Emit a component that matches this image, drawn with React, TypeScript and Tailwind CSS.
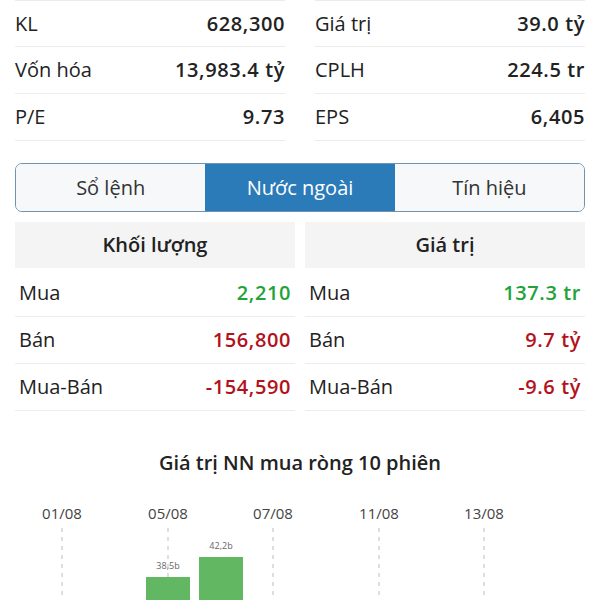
import React from "react";

const font = { fontFamily: '"Open Sans", "Noto Sans", sans-serif' };

function TopRow({ label, value, first }: { label: string; value: string; first?: boolean }) {
  return (
    <div
      className={`flex h-[47px] items-center justify-between border-b border-[#ececec] ${first ? "border-t" : ""}`}
    >
      <span className="text-[20px] text-[#222]">{label}</span>
      <span className="text-[20px] font-semibold tracking-[0.6px] text-[#222]">{value}</span>
    </div>
  );
}

function NNRow({ label, value, color }: { label: string; value: string; color: string }) {
  return (
    <div className="flex h-[47px] items-center justify-between border-b border-[#ececec] px-[4px]">
      <span className="text-[20px] text-[#222]">{label}</span>
      <span className={`text-[20px] font-semibold tracking-[0.6px] ${color}`}>{value}</span>
    </div>
  );
}

export default function App() {
  const green = "text-[#22a33a]";
  const red = "text-[#b3121c]";
  const labels = [
    { x: 62, t: "01/08" },
    { x: 168, t: "05/08" },
    { x: 273, t: "07/08" },
    { x: 379, t: "11/08" },
    { x: 484, t: "13/08" },
  ];
  return (
    <div className="h-[600px] w-[600px] overflow-hidden bg-white" style={font}>
      <div className="px-[15px]">
        <div className="grid grid-cols-2 gap-x-[30px]">
          <div>
            <TopRow label="KL" value="628,300" first />
            <TopRow label="Vốn hóa" value="13,983.4 tỷ" />
            <TopRow label="P/E" value="9.73" />
          </div>
          <div>
            <TopRow label="Giá trị" value="39.0 tỷ" first />
            <TopRow label="CPLH" value="224.5 tr" />
            <TopRow label="EPS" value="6,405" />
          </div>
        </div>

        <div className="mt-[22px] flex h-[49px] overflow-hidden rounded-[7px] border border-[#6f92b0]">
          <div className="flex flex-1 items-center justify-center bg-[#f6f8fa] text-[20px] text-[#333]">
            Sổ lệnh
          </div>
          <div className="flex flex-1 items-center justify-center bg-[#2b7bb9] text-[20px] text-white">
            Nước ngoài
          </div>
          <div className="flex flex-1 items-center justify-center bg-[#f6f8fa] text-[20px] text-[#333]">
            Tín hiệu
          </div>
        </div>

        <div className="mt-[10px] grid grid-cols-2 gap-x-[10px]">
          <div>
            <div className="flex h-[46px] items-center justify-center bg-[#f4f4f4] text-[20px] font-semibold text-[#222]">
              Khối lượng
            </div>
            <div className="mt-[2px]">
              <NNRow label="Mua" value="2,210" color={green} />
              <NNRow label="Bán" value="156,800" color={red} />
              <NNRow label="Mua-Bán" value="-154,590" color={red} />
            </div>
          </div>
          <div>
            <div className="flex h-[46px] items-center justify-center bg-[#f4f4f4] text-[20px] font-semibold text-[#222]">
              Giá trị
            </div>
            <div className="mt-[2px]">
              <NNRow label="Mua" value="137.3 tr" color={green} />
              <NNRow label="Bán" value="9.7 tỷ" color={red} />
              <NNRow label="Mua-Bán" value="-9.6 tỷ" color={red} />
            </div>
          </div>
        </div>
      </div>

      <div className="mt-[38px] text-center text-[20px] font-semibold leading-[28px] text-[#222]">
        Giá trị NN mua ròng 10 phiên
      </div>

      <svg width="600" height="120" className="mt-[13px] block">
        {labels.map((l) => (
          <g key={l.t}>
            <text x={l.x} y={29} textAnchor="middle" fontSize="15" fill="#444" fontFamily="Open Sans, sans-serif">
              {l.t}
            </text>
            <line x1={l.x} y1={38} x2={l.x} y2={120} stroke="#bdbdbd" strokeWidth="1" strokeDasharray="4 5" />
          </g>
        ))}
        <rect x={146} y={87} width={44} height={40} fill="#62b862" />
        <rect x={199} y={67} width={44} height={60} fill="#62b862" />
        <text x={168} y={79} textAnchor="middle" fontSize="9" fill="#666" fontFamily="Open Sans, sans-serif">
          38,5b
        </text>
        <text x={221} y={59} textAnchor="middle" fontSize="9" fill="#666" fontFamily="Open Sans, sans-serif">
          42,2b
        </text>
      </svg>
    </div>
  );
}
